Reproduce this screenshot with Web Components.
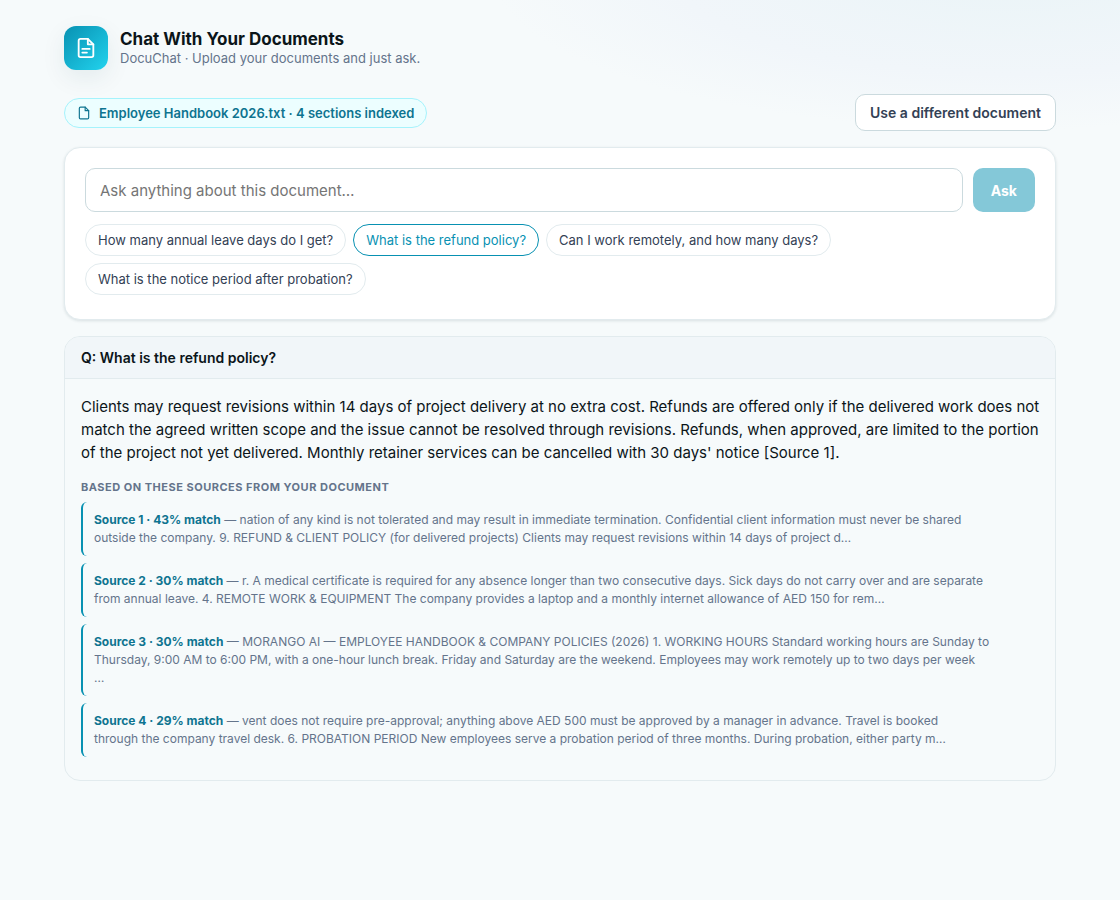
<!DOCTYPE html>
<html lang="en">
<head>
<meta charset="utf-8">
<meta name="viewport" content="width=device-width, initial-scale=1">
<title>Chat With Your Documents</title>
<style>
  :root {
    --ink: #0b1519;
    --text: #334155;
    --muted: #64748b;
    --accent: #0891b2;
    --accent-dark: #0e7490;
    --line: #e2ebee;
    --line-strong: #cbdade;
    --soft: #f1f6f9;
  }
  body {
    margin: 0;
    min-height: 100vh;
    color: var(--ink);
    font-family: Inter, "Liberation Sans", sans-serif;
    font-size: 14px;
    background: radial-gradient(520px 160px at 90% -30px, #eaf4f7 0%, #f1f6fa 65%, #f6fafb 100%) no-repeat #f6fafb;
  }
</style>
</head>
<body>
<docu-chat>
  <app-header slot="header" heading="Chat With Your Documents">DocuChat · Upload your documents and just ask.</app-header>
  <doc-bar slot="bar">Employee Handbook 2026.txt · 4 sections indexed</doc-bar>
  <ask-card>
    <question-chip>How many annual leave days do I get?</question-chip>
    <question-chip active>What is the refund policy?</question-chip>
    <question-chip>Can I work remotely, and how many days?</question-chip>
    <question-chip>What is the notice period after probation?</question-chip>
  </ask-card>
  <answer-card question="What is the refund policy?">
    <span slot="answer">Clients may request revisions within 14 days of project delivery at no extra cost. Refunds are offered only if the delivered work does not match the agreed written scope and the issue cannot be resolved through revisions. Refunds, when approved, are limited to the portion of the project not yet delivered. Monthly retainer services can be cancelled with 30 days' notice [Source 1].</span>
    <source-item label="Source 1 · 43% match">nation of any kind is not tolerated and may result in immediate termination. Confidential client information must never be shared<br>outside the company. 9. REFUND &amp; CLIENT POLICY (for delivered projects) Clients may request revisions within 14 days of project d…</source-item>
    <source-item label="Source 2 · 30% match">r. A medical certificate is required for any absence longer than two consecutive days. Sick days do not carry over and are separate<br>from annual leave. 4. REMOTE WORK &amp; EQUIPMENT The company provides a laptop and a monthly internet allowance of AED 150 for rem…</source-item>
    <source-item label="Source 3 · 30% match">MORANGO AI — EMPLOYEE HANDBOOK &amp; COMPANY POLICIES (2026) 1. WORKING HOURS Standard working hours are Sunday to<br>Thursday, 9:00 AM to 6:00 PM, with a one-hour lunch break. Friday and Saturday are the weekend. Employees may work remotely up to two days per week<br>…</source-item>
    <source-item label="Source 4 · 29% match">vent does not require pre-approval; anything above AED 500 must be approved by a manager in advance. Travel is booked<br>through the company travel desk. 6. PROBATION PERIOD New employees serve a probation period of three months. During probation, either party m…</source-item>
  </answer-card>
</docu-chat>

<script>
// page shell
class DocuChat extends HTMLElement {
  constructor() {
    super();
    this.attachShadow({ mode: 'open' });
    this.shadowRoot.innerHTML = `
      <style>
        :host { display: block; }
        main {
          display: flex;
          flex-direction: column;
          gap: 16px;
          max-width: 992px;
          margin: 0 auto;
          padding: 26px 24px 40px;
        }
        .top { display: flex; flex-direction: column; gap: 24px; }
      </style>
      <main>
        <div class="top">
          <slot name="header"></slot>
          <slot name="bar"></slot>
        </div>
        <slot></slot>
      </main>
    `;
  }
}

class AppHeader extends HTMLElement {
  constructor() {
    super();
    this.attachShadow({ mode: 'open' });
    this.shadowRoot.innerHTML = `
      <style>
        :host { display: block; }
        header { display: flex; align-items: center; gap: 12px; }
        .logo {
          display: grid;
          place-items: center;
          width: 44px;
          height: 44px;
          border-radius: 12px;
          color: white;
          background: linear-gradient(135deg, #0891b2, #22d3ee);
          box-shadow: 0 8px 24px rgba(15, 60, 80, 0.08);
        }
        h1 { margin: 0; font-size: 17px; line-height: 20px; font-weight: 700; }
        p { margin: 0; font-size: 13px; line-height: 18px; color: var(--muted); }
      </style>
      <header>
        <div class="logo">
          <svg width="22" height="22" viewBox="0 0 24 24" fill="none" stroke="currentColor" stroke-width="2" stroke-linecap="round" stroke-linejoin="round" aria-hidden="true">
            <path d="M14 2H6a2 2 0 0 0-2 2v16a2 2 0 0 0 2 2h12a2 2 0 0 0 2-2V8z"/>
            <path d="M14 2v6h6"/>
            <path d="M16 13H8M13 17H8"/>
          </svg>
        </div>
        <div>
          <h1></h1>
          <p><slot></slot></p>
        </div>
      </header>
    `;
    this.shadowRoot.querySelector('h1').textContent = this.getAttribute('heading');
  }
}

class DocBar extends HTMLElement {
  constructor() {
    super();
    this.attachShadow({ mode: 'open' });
    this.shadowRoot.innerHTML = `
      <style>
        :host {
          display: flex;
          flex-wrap: wrap;
          align-items: center;
          justify-content: space-between;
          gap: 12px;
        }
        .pill {
          display: flex;
          align-items: center;
          gap: 8px;
          padding: 5px 12px;
          border: 1px solid #a5f3fc;
          border-radius: 999px;
          background: #ecfeff;
          color: var(--accent-dark);
          font-size: 13px;
          line-height: 18px;
          font-weight: 600;
        }
        button {
          padding: 8px 14px;
          border: 1px solid var(--line-strong);
          border-radius: 10px;
          background: white;
          color: var(--text);
          font: 600 14px/19px Inter, sans-serif;
          cursor: pointer;
        }
      </style>
      <div class="pill">
        <svg width="14" height="14" viewBox="0 0 24 24" fill="none" stroke="currentColor" stroke-width="2" stroke-linecap="round" stroke-linejoin="round" aria-hidden="true">
          <path d="M14 2H6a2 2 0 0 0-2 2v16a2 2 0 0 0 2 2h12a2 2 0 0 0 2-2V8z"/>
          <path d="M14 2v6h6"/>
        </svg>
        <slot></slot>
      </div>
      <button type="button">Use a different document</button>
    `;
  }
}

class AskCard extends HTMLElement {
  constructor() {
    super();
    this.attachShadow({ mode: 'open' });
    this.shadowRoot.innerHTML = `
      <style>
        :host {
          display: block;
          padding: 20px 20px 24px;
          border: 1px solid var(--line);
          border-radius: 16px;
          background: white;
          box-shadow: 0 1px 3px rgba(15, 50, 60, 0.12);
        }
        form { display: flex; gap: 10px; }
        input {
          flex: 1;
          min-width: 0;
          box-sizing: border-box;
          height: 44px;
          padding: 0 14px;
          border: 1px solid var(--line-strong);
          border-radius: 10px;
          background: white;
          color: var(--ink);
          font: 15px Inter, sans-serif;
        }
        input::placeholder { color: #757575; }
        button {
          padding: 0 18px;
          border: 0;
          border-radius: 10px;
          background: #84c8d8;
          color: white;
          font: 700 14px Inter, sans-serif;
        }
        .chips { display: flex; flex-wrap: wrap; gap: 7px; margin-top: 12px; }
      </style>
      <form>
        <input type="text" aria-label="Question" placeholder="Ask anything about this document…">
        <button type="submit" disabled>Ask</button>
      </form>
      <div class="chips"><slot></slot></div>
    `;
  }
}

class QuestionChip extends HTMLElement {
  constructor() {
    super();
    this.attachShadow({ mode: 'open' });
    this.shadowRoot.innerHTML = `
      <style>
        :host { display: block; }
        button {
          display: block;
          padding: 6px 12px;
          border: 1px solid var(--line);
          border-radius: 999px;
          background: white;
          color: var(--text);
          font: 13px/18px Inter, sans-serif;
          cursor: pointer;
        }
        :host([active]) button { border-color: var(--accent); color: var(--accent); }
      </style>
      <button type="button"><slot></slot></button>
    `;
  }
}

class AnswerCard extends HTMLElement {
  constructor() {
    super();
    this.attachShadow({ mode: 'open' });
    this.shadowRoot.innerHTML = `
      <style>
        :host {
          display: block;
          overflow: hidden;
          border: 1px solid var(--line);
          border-radius: 16px;
        }
        h2 {
          margin: 0;
          padding: 11px 16px;
          border-bottom: 1px solid var(--line);
          background: var(--soft);
          font-size: 14px;
          line-height: 19px;
          font-weight: 600;
        }
        .body { padding: 16px 12px 23px 16px; }
        p { margin: 0; font-size: 15px; line-height: 23px; }
        h3 {
          margin: 14px 0 6px;
          color: var(--muted);
          font-size: 11px;
          line-height: 18px;
          font-weight: 700;
          letter-spacing: 0.5px;
          text-transform: uppercase;
        }
        .sources { display: flex; flex-direction: column; gap: 7px; }
      </style>
      <h2></h2>
      <div class="body">
        <p><slot name="answer"></slot></p>
        <h3>Based on these sources from your document</h3>
        <div class="sources"><slot></slot></div>
      </div>
    `;
    this.shadowRoot.querySelector('h2').textContent = 'Q: ' + this.getAttribute('question');
  }
}

class SourceItem extends HTMLElement {
  constructor() {
    super();
    this.attachShadow({ mode: 'open' });
    this.shadowRoot.innerHTML = `
      <style>
        :host {
          display: block;
          padding: 9px 11px;
          border-left: 2px solid var(--accent);
          border-radius: 6px;
          color: var(--muted);
          font-size: 12px;
          line-height: 18px;
        }
        b { color: var(--accent-dark); font-weight: 700; }
      </style>
      <b></b> — <slot></slot>
    `;
    this.shadowRoot.querySelector('b').textContent = this.getAttribute('label');
  }
}

customElements.define('docu-chat', DocuChat);
customElements.define('app-header', AppHeader);
customElements.define('doc-bar', DocBar);
customElements.define('ask-card', AskCard);
customElements.define('question-chip', QuestionChip);
customElements.define('answer-card', AnswerCard);
customElements.define('source-item', SourceItem);
</script>
</body>
</html>
